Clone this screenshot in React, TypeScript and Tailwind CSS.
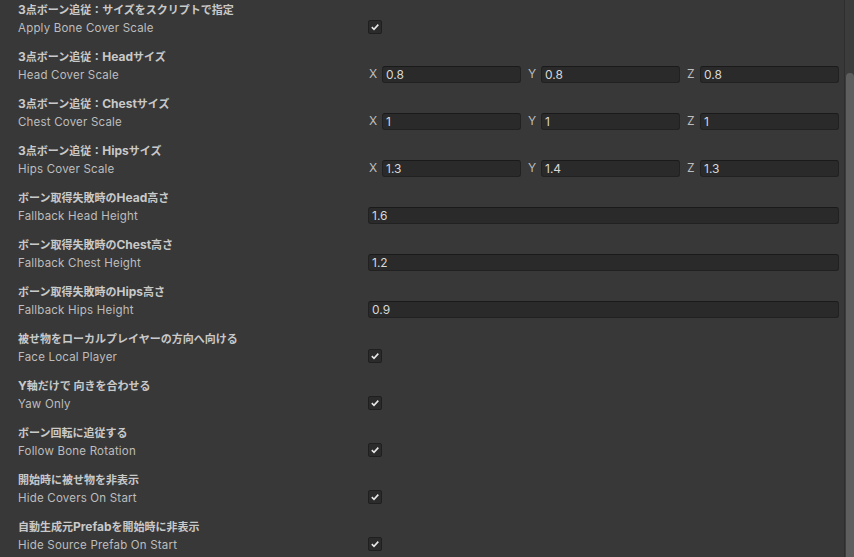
import React from 'react';

type Row =
  | { jp: string; en: string; kind: 'check' }
  | { jp: string; en: string; kind: 'vec'; v: [string, string, string] }
  | { jp: string; en: string; kind: 'num'; v: string };

const rows: Row[] = [
  { jp: '3点ボーン追従：サイズをスクリプトで指定', en: 'Apply Bone Cover Scale', kind: 'check' },
  { jp: '3点ボーン追従：Headサイズ', en: 'Head Cover Scale', kind: 'vec', v: ['0.8', '0.8', '0.8'] },
  { jp: '3点ボーン追従：Chestサイズ', en: 'Chest Cover Scale', kind: 'vec', v: ['1', '1', '1'] },
  { jp: '3点ボーン追従：Hipsサイズ', en: 'Hips Cover Scale', kind: 'vec', v: ['1.3', '1.4', '1.3'] },
  { jp: 'ボーン取得失敗時のHead高さ', en: 'Fallback Head Height', kind: 'num', v: '1.6' },
  { jp: 'ボーン取得失敗時のChest高さ', en: 'Fallback Chest Height', kind: 'num', v: '1.2' },
  { jp: 'ボーン取得失敗時のHips高さ', en: 'Fallback Hips Height', kind: 'num', v: '0.9' },
  { jp: '被せ物をローカルプレイヤーの方向へ向ける', en: 'Face Local Player', kind: 'check' },
  { jp: 'Y軸だけで 向きを合わせる', en: 'Yaw Only', kind: 'check' },
  { jp: 'ボーン回転に追従する', en: 'Follow Bone Rotation', kind: 'check' },
  { jp: '開始時に被せ物を非表示', en: 'Hide Covers On Start', kind: 'check' },
  { jp: '自動生成元Prefabを開始時に非表示', en: 'Hide Source Prefab On Start', kind: 'check' },
];

const font = { fontFamily: 'Inter, "Noto Sans CJK JP", sans-serif' };

// latin runs are drawn a bit larger than kana/kanji, like the inspector font does
function Heading({ text }: { text: string }) {
  const parts = text.match(/[A-Za-z0-9]+|[^A-Za-z0-9]+/g) || [];
  return (
    <div className="h-[18px] pt-[1px] text-[11px] font-bold leading-[18px] text-[#c9c9c9]">
      {parts.map((p, i) =>
        /^[A-Za-z0-9]/.test(p) ? (
          <span key={i} className="text-[12px] leading-[18px]">
            {p}
          </span>
        ) : (
          <span key={i} className="text-[11px] leading-[18px]">
            {p}
          </span>
        )
      )}
    </div>
  );
}

function Field({ value }: { value: string }) {
  return (
    <div className="h-[17px] flex-1 rounded-[3px] border border-[#212121] border-t-[#1a1a1a] bg-[#2a2a2a] pl-[3px] text-[12px] leading-[15px] text-[#d8d8d8]">
      {value}
    </div>
  );
}

function Check() {
  return (
    <div className="flex h-[14px] w-[14px] items-center justify-center rounded-[2px] border border-[#1f1f1f] bg-[#2b2b2b]">
      <svg width="10" height="10" viewBox="0 0 10 10">
        <path d="M1.8 5.2 L4 7.3 L8.3 2.6" fill="none" stroke="#e8e8e8" strokeWidth="1.6" />
      </svg>
    </div>
  );
}

export default function App() {
  return (
    <div className="flex h-[557px] w-[854px] overflow-hidden bg-[#383838]" style={font}>
      <div className="flex-1">
        {rows.map((r, i) => (
          <div key={i} className="h-[47px] pl-[18px] pr-[5px]">
            <Heading text={r.jp} />
            <div className="flex h-[18px] items-center">
              <div className="w-[350px] pt-[2px] text-[11.5px] leading-[18px] tracking-[0.2px] text-[#bdbdbd]">{r.en}</div>
              <div className="flex flex-1 items-center">
                {r.kind === 'check' && <Check />}
                {r.kind === 'num' && <Field value={r.v} />}
                {r.kind === 'vec' && (
                  <div className="flex flex-1 gap-[6px]">
                    {(['X', 'Y', 'Z'] as const).map((a, j) => (
                      <div key={a} className="flex flex-1 items-center">
                        <span className="w-[14px] pl-[1px] text-[12px] text-[#bdbdbd]">{a}</span>
                        <Field value={r.v[j]} />
                      </div>
                    ))}
                  </div>
                )}
              </div>
            </div>
          </div>
        ))}
      </div>
      <div className="flex w-[10px] flex-col border-l border-[#2e2e2e] bg-[#3c3c3c]">
        <div className="h-[73px]" />
        <div className="ml-[1px] w-[8px] flex-1 rounded-t-[4px] bg-[#5e5e5e]" />
      </div>
    </div>
  );
}
